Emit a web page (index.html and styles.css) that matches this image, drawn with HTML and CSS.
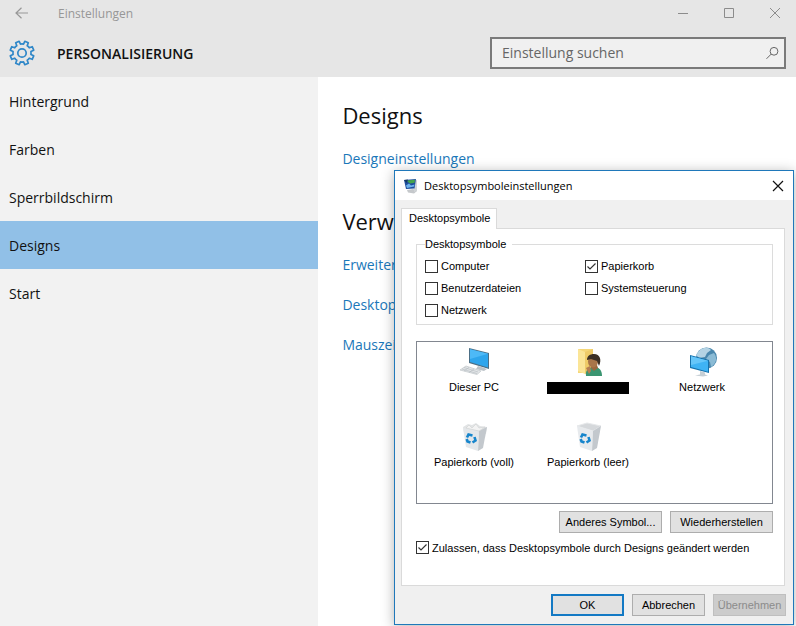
FILE: index.html
```
<!DOCTYPE html>
<html lang="de">
<head>
    <meta charset="UTF-8">
    <meta name="viewport" content="width=device-width, initial-scale=1.0">
    <title>Einstellungen</title>
    <link rel="stylesheet" href="styles.css">
</head>
<body>
    <header class="header">
        <div class="titlebar">
            <button type="button" class="back" aria-label="Zurück">
                <svg width="14" height="12" viewBox="0 0 14 12"><path d="M13 6H1M6.500 .8L1 6l5.500 5.200" fill="none" stroke="#979797" stroke-width="1.200"/></svg>
            </button>
            <span class="app-name">Einstellungen</span>
            <div class="window-buttons">
                <button type="button" aria-label="Minimieren">
                    <svg width="12" height="12" viewBox="0 0 12 12"><path d="M1 6.500h10" stroke="#8c8c8c"/></svg>
                </button>
                <button type="button" aria-label="Maximieren">
                    <svg width="12" height="12" viewBox="0 0 12 12"><path d="M1.500 1.500h9v9h-9z" fill="none" stroke="#8c8c8c"/></svg>
                </button>
                <button type="button" aria-label="Schließen">
                    <svg width="12" height="12" viewBox="0 0 12 12"><path d="M1 1l10 10M11 1L1 11" stroke="#8c8c8c"/></svg>
                </button>
            </div>
        </div>
        <div class="heading-row">
            <svg class="gear" width="26" height="26" viewBox="0 0 26 26" fill="none" stroke="#2f87c8" stroke-width="1.700" stroke-linejoin="round">
                <path d="M14.500 4.100L15.800 1.300L19.300 2.800L18.200 5.700Q19.500 6.500 20.300 7.800L23.200 6.700L24.700 10.200L21.900 11.500Q22.200 13 21.900 14.500L24.700 15.800L23.200 19.300L20.300 18.200Q19.500 19.500 18.200 20.300L19.300 23.200L15.800 24.700L14.500 21.900Q13 22.200 11.500 21.900L10.200 24.700L6.700 23.200L7.800 20.300Q6.500 19.500 5.700 18.200L2.800 19.300L1.300 15.800L4.100 14.500Q3.800 13 4.100 11.500L1.300 10.200L2.800 6.700L5.700 7.800Q6.500 6.500 7.800 5.700L6.700 2.800L10.200 1.300L11.500 4.100Q13 3.800 14.500 4.100Z"/>
                <circle cx="13" cy="13" r="4.200"/>
            </svg>
            <h1>PERSONALISIERUNG</h1>
            <form class="search">
                <input type="search" placeholder="Einstellung suchen" aria-label="Einstellung suchen">
                <button type="button" aria-label="Suchen">
                    <svg width="14" height="14" viewBox="0 0 14 14" fill="none" stroke="#666"><circle cx="9" cy="5.300" r="3.900"/><path d="M6.200 8.100L1.500 12.800"/></svg>
                </button>
            </form>
        </div>
    </header>

    <div class="page">
        <nav class="sidebar">
            <a href="#hintergrund">Hintergrund</a>
            <a href="#farben">Farben</a>
            <a href="#sperrbildschirm">Sperrbildschirm</a>
            <a href="#designs" class="active">Designs</a>
            <a href="#start">Start</a>
        </nav>
        <main class="content">
            <h2>Designs</h2>
            <a href="#designeinstellungen">Designeinstellungen</a>
            <h2>Verwandte</h2>
            <a href="#sound">Erweiterte</a>
            <a href="#symbole">Desktopsymbole</a>
            <a href="#maus">Mauszeiger</a>
        </main>
    </div>

    <section class="dialog" role="dialog" aria-labelledby="dialogTitle">
        <div class="dialog-title">
            <svg width="16" height="16" viewBox="0 0 16 16">
                <path d="M4 12l6-1 4 2-3 2.500-6-1z" fill="#c5c8cb"/>
                <path d="M11 3l3-1v11l-3 1z" fill="#cfd3d6"/>
                <path d="M1 2l12-1-1.500 9.500L3 11z" fill="#204f9c"/>
                <path d="M4 2.500l8-.8-.4 3L7 5.500 5 4z" fill="#45a54c"/>
                <path d="M3 7.500l3-2 2 2 3.500-1-.4 2L4 10z" fill="#6fb4ee"/>
                <path d="M1 2l4-.5L3.500 5z" fill="#163967"/>
            </svg>
            <span id="dialogTitle">Desktopsymboleinstellungen</span>
            <button type="button" class="close" aria-label="Schließen">
                <svg width="12" height="12" viewBox="0 0 12 12"><path d="M1 1l10 10M11 1L1 11" stroke="#111" stroke-width="1.200"/></svg>
            </button>
        </div>
        <div class="dialog-body">
            <button type="button" class="tab" role="tab" aria-selected="true">Desktopsymbole</button>
            <div class="panel">
                <fieldset class="group">
                    <legend>Desktopsymbole</legend>
                    <label><input type="checkbox">Computer</label>
                    <label><input type="checkbox" checked>Papierkorb</label>
                    <label><input type="checkbox">Benutzerdateien</label>
                    <label><input type="checkbox">Systemsteuerung</label>
                    <label><input type="checkbox">Netzwerk</label>
                </fieldset>

                <ul class="icons">
                    <li>
                        <svg width="32" height="32" viewBox="0 0 32 32">
                            <path d="M11 2l20 5v16L11 17z" fill="#4c6f86"/>
                            <path d="M12 3.200l18 4.600v13.600L12 16z" fill="#2ea5ec"/>
                            <path d="M12 3.200l18 4.600L12 13z" fill="#4db9f7"/>
                            <path d="M20 20l5 1.500 4 1.500-3 2-8-2z" fill="#bcc3c8"/>
                            <path d="M8 20l15 5-4 3.500L2 24z" fill="#e3e6e8" stroke="#c0c6ca" stroke-width=".7"/>
                            <path d="M6 21.500l14 4.500M4 23l15 4.500M11 21.500l-5 3.500M16 23l-5 3.500" stroke="#b4bbc0" stroke-width=".6"/>
                        </svg>
                        <span>Dieser PC</span>
                    </li>
                    <li>
                        <svg width="32" height="32" viewBox="0 0 32 32">
                            <path d="M6 3h15v24H6z" fill="#f5d778"/>
                            <path d="M6 3l7 3v22l-7-3z" fill="#fbe597"/>
                            <path d="M13 6l8-3v22l-8 3z" fill="#efcb68"/>
                            <path d="M14 30c-1-6 3-9 8-9s8 3 8 9z" fill="#3b9571"/>
                            <path d="M19 19h6l1 3-4 3-3-3z" fill="#9a673e"/>
                            <ellipse cx="21" cy="15.500" rx="5" ry="6" fill="#a97549"/>
                            <path d="M15 14c0-4 3-6 7-6 6 0 8 6 5 12l-2-5-6-2z" fill="#3c3025"/>
                            <path d="M14 22l4-2 1 5-2 3z" fill="#b47e52"/>
                        </svg>
                        <span class="hidden-name"></span>
                    </li>
                    <li>
                        <svg width="32" height="32" viewBox="0 0 32 32">
                            <circle cx="20.500" cy="12" r="10.500" fill="#4a87ad"/>
                            <path d="M13 5c4-4 9-4 12-1l-4 3-2 4-6 1-3-3z" fill="#b4d3e4"/>
                            <path d="M23 9l5-2c4 5 2 11-3 14l-1-5-4-3z" fill="#8bbbd5"/>
                            <path d="M4 9l19 5v13L4 22z" fill="#1672ac"/>
                            <path d="M5 10.200l17 4.500v11L5 21z" fill="#3fb3f4"/>
                            <path d="M5 10.200l17 4.500L5 19z" fill="#66c6f9"/>
                            <path d="M14 25l5 1.500v2l3 1-5 1-8-1 5-1z" fill="#c6cfd5"/>
                        </svg>
                        <span>Netzwerk</span>
                    </li>
                    <li>
                        <svg width="32" height="32" viewBox="0 0 32 32">
                            <path d="M5 6l5-3 4 1 4-2 4 3 7 1-1 7-22-2z" fill="#e2e4e5"/>
                            <path d="M5 7l16 3-1 20-12-4z" fill="#e4e7ea"/>
                            <path d="M21 10l8-4-4 21-5 3z" fill="#c3c8cd"/>
                            <path d="M8 7l3-3 3 3 4-4 3 4 6-1-6 4z" fill="#f3f3f3" stroke="#cfd1d2" stroke-width=".6"/>
                            <g fill="none" stroke="#1685cc" stroke-width="2.600"><path d="M9 16.500l1.500-3 4 1"/><path d="M16.500 16l1 3.500-3 2"/><path d="M12.500 21.500l-3-1-.8-2.500"/></g>
                        </svg>
                        <span>Papierkorb (voll)</span>
                    </li>
                    <li>
                        <svg width="32" height="32" viewBox="0 0 32 32">
                            <path d="M5 5l10-3 14 3-8 5z" fill="#d5d8db" stroke="#e6e8ea"/>
                            <path d="M5 5l16 5-1 20-12-4z" fill="#e7eaed"/>
                            <path d="M21 10l8-5-4 22-5 3z" fill="#c3c8cd"/>
                            <g fill="none" stroke="#1685cc" stroke-width="2.600"><path d="M9 16.500l1.500-3 4 1"/><path d="M16.500 16l1 3.500-3 2"/><path d="M12.500 21.500l-3-1-.8-2.500"/></g>
                        </svg>
                        <span>Papierkorb (leer)</span>
                    </li>
                </ul>

                <div class="panel-buttons">
                    <button type="button" class="btn">Anderes Symbol...</button>
                    <button type="button" class="btn">Wiederherstellen</button>
                </div>
                <label><input type="checkbox" checked>Zulassen, dass Desktopsymbole durch Designs geändert werden</label>
            </div>
            <div class="dialog-footer">
                <button type="button" class="btn primary">OK</button>
                <button type="button" class="btn">Abbrechen</button>
                <button type="button" class="btn" disabled>Übernehmen</button>
            </div>
        </div>
    </section>
</body>
</html>
```
FILE: styles.css
```
* {
    box-sizing: border-box;
}

body {
    font-family: "Open Sans", "Noto Sans", sans-serif;
    font-size: 14px;
    color: #111;
    margin: 0;
    min-height: 100vh;
    display: flex;
    flex-direction: column;
    overflow: hidden;
}

a {
    text-decoration: none;
}

button {
    font: inherit;
    color: inherit;
    padding: 0;
    border: none;
    background: none;
}

svg {
    display: block;
}

/* Header */
.header {
    background: #e6e6e6;
    padding-bottom: 8px;
}

.titlebar {
    display: flex;
    align-items: center;
    height: 26px;
    padding: 0 15px;
}

.app-name {
    margin-left: 29px;
    font-size: 12px;
    color: #979797;
}

.window-buttons {
    display: flex;
    gap: 34px;
    margin-left: auto;
}

.heading-row {
    display: flex;
    align-items: center;
    padding: 11px 10px 0 9px;
}

h1 {
    margin: 0 0 0 22px;
    font-size: 14px;
    font-weight: 600;
}

.search {
    display: flex;
    align-items: center;
    width: 296px;
    height: 32px;
    margin-left: auto;
    padding: 0 5px 0 10px;
    background: #f0f0f0;
    border: 2px solid #7a7a7a;
}

.search input {
    flex: 1;
    min-width: 0;
    padding: 0 0 1px;
    font: inherit;
    border: none;
    outline: none;
    background: none;
}

.search input::placeholder {
    color: #666;
}

/* Page */
.page {
    display: flex;
    flex: 1;
}

.sidebar {
    flex: 0 0 40%;
    background: #f2f2f2;
}

.sidebar a {
    display: block;
    padding: 1px 0 0 9px;
    line-height: 47px;
    color: #111;
}

.sidebar .active {
    background: #91c0e7;
}

.content {
    flex: 1;
    padding: 22px 24px;
    background: #fff;
}

.content h2 {
    margin: 0 0 8px;
    font-size: 22px;
    font-weight: 400;
    line-height: 32px;
}

.content a {
    display: block;
    line-height: 40px;
    color: #1a77b9;
}

.content a + h2 {
    margin-top: 26px;
}

/* Dialog */
.dialog {
    position: absolute;
    top: 170px;
    right: 2px;
    width: 400px;
    font-family: "Liberation Sans", Arial, sans-serif;
    font-size: 11px;
    color: #000;
    background: #f0f0f0;
    border: 1px solid #1f78ba;
    box-shadow: 0 2px 12px rgba(0, 0, 0, 0.3);
}

.dialog-title {
    display: flex;
    align-items: center;
    gap: 5px;
    height: 29px;
    padding: 0 9px 0 8px;
    font-family: "Open Sans", "Noto Sans", sans-serif;
    background: #fff;
}

.close {
    margin-left: auto;
}

.dialog-body {
    padding: 8px 7px 8px 6px;
}

.tab {
    position: relative;
    z-index: 1;
    display: block;
    height: 21px;
    padding: 0 6px 2px 7px;
    background: #fff;
    border: 1px solid #dadada;
    border-bottom: none;
}

.panel {
    margin: -1px 1px 8px 0;
    padding: 8px 11px 31px 14px;
    background: #fff;
    border: 1px solid #dadada;
}

/* Check boxes */
label {
    display: flex;
    align-items: center;
    gap: 3px;
}

input[type="checkbox"] {
    appearance: none;
    width: 13px;
    height: 13px;
    margin: 0;
    border: 1px solid #333;
    background: #fff;
}

input[type="checkbox"]:checked {
    background: #fff url("data:image/svg+xml,%3Csvg xmlns='http://www.w3.org/2000/svg' viewBox='0 0 11 11'%3E%3Cpath d='M1.500 5.500l2.500 2.500 5.500-5.500' fill='none' stroke='%23333' stroke-width='1.200'/%3E%3C/svg%3E");
}

.group {
    display: grid;
    grid-template-columns: 160px 1fr;
    grid-auto-rows: 22px;
    margin: 0 0 16px;
    padding: 4px 8px 3px;
    border: 1px solid #dcdcdc;
}

.group legend {
    padding: 0 6px 0 0;
    line-height: 14px;
}

/* Icon list */
.icons {
    display: grid;
    grid-template-columns: repeat(3, 114px);
    grid-auto-rows: 75px;
    height: 163px;
    margin: 0 0 7px;
    padding: 4px 0;
    list-style: none;
    border: 1px solid #828790;
}

.icons li {
    display: flex;
    flex-direction: column;
    align-items: center;
    gap: 2px;
    line-height: 14px;
}

.hidden-name {
    width: 82px;
    height: 12px;
    margin-top: 2px;
    background: #000;
}

/* Buttons */
.panel-buttons {
    display: flex;
    justify-content: flex-end;
    gap: 8px;
    margin-bottom: 8px;
}

.btn {
    height: 22px;
    background: #e1e1e1;
    border: 1px solid #adadad;
}

.panel-buttons .btn {
    width: 103px;
}

.dialog-footer {
    display: flex;
    justify-content: flex-end;
    gap: 8px;
}

.dialog-footer .btn {
    width: 73px;
}

.primary {
    border: 2px solid #1379c4;
}

.btn:disabled {
    color: #8b8b8b;
    background: #ccc;
    border-color: #bfbfbf;
}
```
